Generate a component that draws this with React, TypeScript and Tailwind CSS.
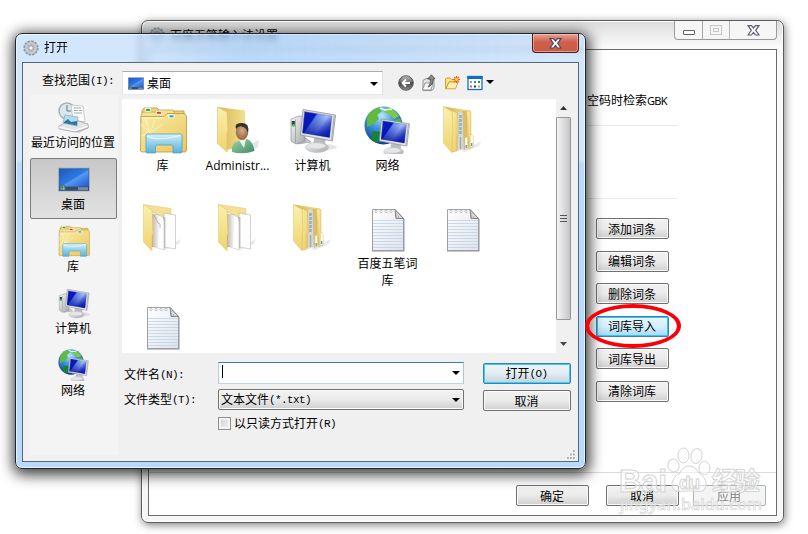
import type { ReactNode } from 'react';
import clsx from 'clsx';

const uiFont = "font-['Open_Sans','Noto_Sans_CJK_SC',sans-serif]";
const formFont = "font-['Noto_Sans_CJK_SC',sans-serif]";

/* Shared gradients for all icons */
const IconDefs = () => (
  <svg width="0" height="0" className="absolute" aria-hidden="true">
    <defs>
      <linearGradient id="yellow" x1="0" y1="0" x2="1" y2="1">
        <stop offset="0" stopColor="#f9eda9" />
        <stop offset="1" stopColor="#e9c75c" />
      </linearGradient>
      <linearGradient id="panel" x1="0" y1="0" x2="0" y2="1">
        <stop offset="0" stopColor="#fbf0ae" />
        <stop offset="1" stopColor="#f0d46c" />
      </linearGradient>
      <linearGradient id="back" x1="0" y1="0" x2="1" y2="0">
        <stop offset="0" stopColor="#d8b657" />
        <stop offset="1" stopColor="#f2df8e" />
      </linearGradient>
      <linearGradient id="screen" x1="0" y1="0" x2="1" y2="0.6">
        <stop offset="0" stopColor="#0a1cb4" />
        <stop offset="0.38" stopColor="#0719bd" />
        <stop offset="0.42" stopColor="#5c83e8" />
        <stop offset="0.7" stopColor="#a9c2f6" />
        <stop offset="1" stopColor="#2a4bd5" />
      </linearGradient>
      <linearGradient id="screenDark" x1="0" y1="0" x2="0" y2="1">
        <stop offset="0.2" stopColor="#0414a8" stopOpacity="0" />
        <stop offset="1" stopColor="#0412a4" stopOpacity="0.95" />
      </linearGradient>
      <linearGradient id="metal" x1="0" y1="0" x2="1" y2="1">
        <stop offset="0" stopColor="#f8f8f8" />
        <stop offset="1" stopColor="#a4a8ab" />
      </linearGradient>
      <linearGradient id="glass" x1="0" y1="0" x2="0" y2="1">
        <stop offset="0" stopColor="#d6f2fb" />
        <stop offset="0.5" stopColor="#8fcfe9" />
        <stop offset="1" stopColor="#5fb0d8" />
      </linearGradient>
      <linearGradient id="desk" x1="0" y1="0" x2="1" y2="1">
        <stop offset="0" stopColor="#1d57b8" />
        <stop offset="0.5" stopColor="#2e78e4" />
        <stop offset="0.55" stopColor="#5698f2" />
        <stop offset="1" stopColor="#1c58cf" />
      </linearGradient>
      <linearGradient id="note" x1="0" y1="0" x2="1" y2="1">
        <stop offset="0" stopColor="#ffffff" />
        <stop offset="1" stopColor="#dfe2ef" />
      </linearGradient>
      <radialGradient id="globe" cx="0.45" cy="0.25" r="0.8">
        <stop offset="0" stopColor="#b9e6fa" />
        <stop offset="0.4" stopColor="#3f9bdc" />
        <stop offset="1" stopColor="#0e2f86" />
      </radialGradient>
      <radialGradient id="skin" cx="0.5" cy="0.4" r="0.6">
        <stop offset="0" stopColor="#d9ac86" />
        <stop offset="1" stopColor="#94643f" />
      </radialGradient>
      <linearGradient id="shirt" x1="0" y1="0" x2="1" y2="1">
        <stop offset="0" stopColor="#9ed4a9" />
        <stop offset="1" stopColor="#3d8a63" />
      </linearGradient>
      <linearGradient id="ball" x1="0" y1="0" x2="0" y2="1">
        <stop offset="0" stopColor="#a4a4a4" />
        <stop offset="0.5" stopColor="#444444" />
        <stop offset="1" stopColor="#8f8f8f" />
      </linearGradient>
      <linearGradient id="shade" x1="0" y1="0" x2="1" y2="0">
        <stop offset="0" stopColor="#9a8560" stopOpacity="0.6" />
        <stop offset="1" stopColor="#999" stopOpacity="0" />
      </linearGradient>
    </defs>
  </svg>
);

type IconProps = { size?: number };

const LibraryIcon = ({ size = 48 }: IconProps) => (
  <svg width={size} height={size} viewBox="0 0 48 48">
    <path d="M3 12V5L5 2H18L21 5H45V14Z" fill="#ecd47c" stroke="#b89339" strokeWidth="0.8" />
    <path d="M2 14V9L4 6H17L19 4H34L36 8H46V18H2Z" fill="#f4e195" stroke="#bf9b42" strokeWidth="0.7" />
    <rect x="6.500" y="2.500" width="5" height="2.800" fill="#2ba834" stroke="#fff" strokeWidth="0.8" />
    <rect x="17.500" y="5.300" width="5" height="2.800" fill="#d93b20" stroke="#fff" strokeWidth="0.8" />
    <path d="M2 10.500H25L28 7.500H45L47.500 10V45L46 46H3L1.500 45Z" fill="url(#yellow)" stroke="#bf9736" strokeWidth="0.8" />
    <path d="M2.500 12H26" stroke="#fff8cf" />
    <rect x="30" y="9" width="5" height="2.800" fill="#2996dd" stroke="#fff" strokeWidth="0.8" />
    <path d="M11 27L2 18M11 27L6 12M11 27L16 14M11 27L24 18M11 27L2 30" stroke="#fffbe0" strokeWidth="0.8" opacity="0.75" />
    <path d="M8 28H42L43 29V46L42 47H34V40L32.500 39H18L16.500 40V47H8L7 46V29Z" fill="url(#glass)" stroke="#4da2cb" strokeWidth="0.8" />
    <path d="M8.500 30Q20 36 41.500 29" stroke="#effbff" strokeWidth="1.200" fill="none" opacity="0.8" />
  </svg>
);

const Monitor = () => (
  <>
    <path d="M26 28L37 30L36 40L24 39Z" fill="#b9bdc0" />
    <ellipse cx="28" cy="41.500" rx="11.500" ry="5" fill="url(#metal)" stroke="#b4b7ba" strokeWidth="0.6" />
    <ellipse cx="28" cy="40" rx="8" ry="2.500" fill="#e4e6e8" />
    <path d="M14 3.500L46.500 9L43.500 35L11.500 29Z" fill="#e2e4e6" stroke="#8d9296" strokeWidth="0.8" />
    <path d="M15.500 5.500L43 10L40.500 31.500L13.500 27Z" fill="url(#screen)" stroke="#8286a0" strokeWidth="0.5" />
    <path d="M15.500 5.500L43 10L40.500 31.500L13.500 27Z" fill="url(#screenDark)" />
    <path d="M45.300 9.500L42.500 34" stroke="#a4a8aa" strokeWidth="1" />
  </>
);

const ComputerIcon = ({ size = 48 }: IconProps) => (
  <svg width={size} height={size} viewBox="0 0 48 48">
    <ellipse cx="36" cy="41" rx="12" ry="3" fill="#bbb" opacity="0.4" />
    <path d="M7 34L17 32L22 36L9 38Z" fill="#c2c5c7" stroke="#8f9396" strokeWidth="0.6" />
    <path d="M2 13L10 10L16 11V35L7 38L2 35Z" fill="url(#metal)" stroke="#8c9093" strokeWidth="0.7" />
    <path d="M6.500 13.500V37" stroke="#999c9f" strokeWidth="0.8" />
    <rect x="2.800" y="15" width="3" height="5" fill="#353b40" />
    <circle cx="4.500" cy="19.500" r="1.400" fill="#46d13f" />
    <Monitor />
  </svg>
);

const NetworkIcon = ({ size = 48 }: IconProps) => (
  <svg width={size} height={size} viewBox="0 0 48 48">
    <circle cx="19.500" cy="19.500" r="19" fill="url(#globe)" />
    <path d="M3 12Q7 3 15 1.500L18 5L13 9L15 13L9 18L3 21Z" fill="#5fbb39" />
    <path d="M22 1Q31 3 35 10L30 13L25 8L20 6Z" fill="#7cc947" />
    <path d="M9 25L16 26L18 32L13 37Q8 35 7 32Z" fill="#168236" />
    <path d="M16 2L21 4L28 3" stroke="#eefaff" strokeWidth="1.500" fill="none" />
    <path d="M31 14L36 12L38 18L34 18Z" fill="#4fb53c" />
    <g transform="translate(5.500 10) scale(0.86)">
      <Monitor />
    </g>
  </svg>
);

const FolderShadow = () => <path d="M22 45L42 35L40 40L26 46Z" fill="#999" opacity="0.2" />;

const UserFolderIcon = () => (
  <svg width="48" height="48" viewBox="0 0 48 48">
    <path d="M24 45L45 34L44 41L34 46Z" fill="#999" opacity="0.25" />
    <path d="M3.500 1L31 4.500V39L13 44Z" fill="url(#back)" />
    <path d="M3.500 1L13 6L14 25L13 28V46L3.500 37.500Z" fill="url(#panel)" stroke="#dcbf60" strokeWidth="0.6" />
    <path d="M18 46Q17 37 24 35L33 33Q39 35 40.500 45Q29 49 18 46Z" fill="url(#shirt)" />
    <path d="M25 34L30 42L32 33Z" fill="#f0f2ee" />
    <ellipse cx="28" cy="26" rx="6.200" ry="8" fill="url(#skin)" />
    <path d="M22 23Q20 17 27 17Q36 16 34 27Q32 21 29 21Q25 19 22 23Z" fill="#353330" />
  </svg>
);

const FullFolderIcon = () => (
  <svg width="48" height="48" viewBox="0 0 48 48">
    <FolderShadow />
    <path d="M4.500 0.500L31 4.500L32 37L16 45Z" fill="url(#back)" />
    <path d="M19 6L25 5.500V43L19 45Z" fill="#d3d9dc" />
    <path d="M21.500 9V29" stroke="#7d9cb4" strokeWidth="2.500" strokeDasharray="3 1" opacity="0.7" />
    <path d="M21.500 31V43" stroke="#a4a9ab" strokeWidth="1.500" />
    <path d="M24 5L28 5.500V30L30 32V41L25 44Z" fill="#ddbe66" stroke="#cdab50" strokeWidth="0.4" />
    <path d="M27.500 4.500L32 5.500V28L34 30V41L30 43Z" fill="url(#yellow)" stroke="#cfae50" strokeWidth="0.4" />
    <path d="M26 32L28.500 31V43L26 44ZM31.500 29H34V40.500L31.500 41.500Z" fill="#fff" stroke="#d9c47b" strokeWidth="0.4" />
    <path d="M27.200 39V42.500M32.700 37V40" stroke="#4a97dd" strokeWidth="1.300" />
    <path d="M13 4.500L18.500 7L19.500 28L18 30V45L13 46Z" fill="url(#yellow)" stroke="#cfae50" strokeWidth="0.5" />
    <path d="M4.500 0.500L13 5.500L14 28L13 31V47L4.500 37Z" fill="url(#panel)" stroke="#dfc263" strokeWidth="0.5" />
  </svg>
);

const PaperFolderIcon = ({ folded = false }: { folded?: boolean }) => (
  <svg width="48" height="48" viewBox="0 0 48 48">
    <FolderShadow />
    <path d="M4.500 0.500L32 4.500V15L14 42Z" fill="#f3e093" stroke="#dcc677" strokeWidth="0.5" />
    <path d="M25 9L36.500 11V45L25 43Z" fill="#fdfdfd" stroke="#b4b4b4" strokeWidth="0.6" />
    <path d="M23 13H26.500V43L24 46Z" fill="#888" opacity="0.45" />
    <path d="M13 8L24 13L25 18V46L13 42Z" fill="#fdfdfd" stroke="#c2c2c2" strokeWidth="0.6" />
    {folded && <path d="M15 11L19 19L21 20L21 24" fill="none" stroke="#aaa" strokeWidth="0.8" />}
    <path d="M13 10H21L19 43H13Z" fill="url(#shade)" />
    <path d="M4.500 0.500L13 6L14 29L13 32V47L4.500 38Z" fill="url(#panel)" stroke="#dfc263" strokeWidth="0.5" />
  </svg>
);

const NotepadIcon = () => (
  <svg width="48" height="48" viewBox="0 0 48 48">
    <path d="M9 6H31L40.500 15V47.500H8Z" fill="#8f9195" />
    <path d="M8.500 5.500H31L39.500 14.500V46.500H8.500Z" fill="url(#note)" stroke="#97999e" strokeWidth="0.9" />
    <path d="M9 16.500H39M9 19.500H39M9 22.500H39M9 25.500H39M9 28.500H39M9 31.500H39M9 34.500H39M9 37.500H39M9 40.500H39M9 43.500H39" stroke="#c3d7e3" strokeWidth="0.9" />
    <path d="M31 5.500L39.500 14.500H32Z" fill="#d6d8da" stroke="#77797d" strokeWidth="0.9" />
    <path d="M32 9V13H36" stroke="#8a8c90" fill="none" strokeDasharray="1 1" />
    {[12, 17, 22, 27].map((x) => (
      <circle key={x} cx={x} cy="7.500" r="1.200" fill="#fff" stroke="#aaacb0" strokeWidth="0.7" />
    ))}
  </svg>
);

const RecentIcon = () => (
  <svg width="32" height="32" viewBox="0 0 32 32">
    <path d="M17 31L31 24V27L21 32Z" fill="#aaa" opacity="0.5" />
    <circle cx="9" cy="10" r="8" fill="#dce7ec" stroke="#a4b1b8" strokeWidth="1.500" />
    <path d="M9 4V10H13" stroke="#65757e" fill="none" />
    <path d="M13 4L25 5L27 21L15 19Z" fill="#fbfbfb" stroke="#b5babd" strokeWidth="0.7" />
    <path d="M16 7H23M16 9.500H20M16 12H24M21 9.500H24" stroke="#8b9ca8" strokeWidth="0.8" />
    <path d="M1 25L14 18L30 23V27L17 31L1 28Z" fill="#e4e5e6" stroke="#989b9d" strokeWidth="0.7" />
    <path d="M7 14L20 16L19 25L5 22Z" fill="#b4def5" stroke="#8fa0aa" strokeWidth="0.7" />
    <path d="M6 21L10 18L13 21L19 20V24.500L6 22Z" fill="#267a9b" />
    <path d="M1 26L17 29.500L30 25" stroke="#fff" fill="none" />
  </svg>
);

const DesktopIcon = ({ className }: { className: string }) => (
  <svg className={className} viewBox="0 0 32 26" preserveAspectRatio="none">
    <rect x="0.500" y="1" width="31" height="24" fill="#41628f" stroke="#a7b6c9" strokeWidth="0.8" />
    <rect x="1.500" y="2" width="29" height="18.500" fill="url(#desk)" />
    <rect x="1" y="20.500" width="30" height="4" fill="#364c6d" />
    <rect x="20" y="21" width="10" height="3" fill="#778ba5" />
    <circle cx="4.500" cy="21.500" r="3.300" fill="#2a72a8" />
    <path d="M2.500 19.500H4.200V21.200H2.500Z" fill="#ef5b24" />
    <path d="M4.800 19.500H6.500V21.200H4.800Z" fill="#8dc63f" />
    <path d="M2.500 21.800H4.200V23.500H2.500Z" fill="#4cb9f1" />
    <path d="M4.800 21.800H6.500V23.500H4.800Z" fill="#ffcb2f" />
  </svg>
);

const GearIcon = ({ className }: { className?: string }) => (
  <svg width="16" height="16" viewBox="0 0 16 16" className={className}>
    <circle cx="8" cy="8" r="6.900" fill="none" stroke="#8f989f" strokeWidth="1.600" strokeDasharray="2.400 1.210" />
    <circle cx="8" cy="8" r="4.700" fill="none" stroke="#8f989f" strokeWidth="3.600" />
    <circle cx="8" cy="8" r="4.700" fill="none" stroke="#c6cdd2" strokeWidth="2.600" />
    <circle cx="8" cy="8" r="2.300" fill="#eef5fb" stroke="#7d868d" strokeWidth="0.8" />
  </svg>
);

const CloseGlyph = ({ outline }: { outline: string }) => (
  <svg width="13" height="11" viewBox="0 0 13 11">
    <path d="M1 0.700H4.500L6.500 3L8.500 0.700H12L8.700 5.300L12 10H8.500L6.500 7.500L4.500 10H1L4.300 5.300Z" fill="#fbfbfb" stroke={outline} strokeWidth="1.200" />
  </svg>
);

const Caret = ({ className }: { className?: string }) => (
  <svg width="8" height="4" viewBox="0 0 8 4" className={className}>
    <path d="M0 0H8L4 4Z" fill="#000" />
  </svg>
);

const places = [
  { icon: <RecentIcon />, label: '最近访问的位置' },
  { icon: <DesktopIcon className="mt-1 h-[25px] w-8" />, label: '桌面', selected: true },
  { icon: <LibraryIcon size={32} />, label: '库' },
  { icon: <ComputerIcon size={32} />, label: '计算机' },
  { icon: <NetworkIcon size={32} />, label: '网络' },
];

const files = [
  { icon: <LibraryIcon />, label: '库' },
  { icon: <UserFolderIcon />, label: 'Administr...' },
  { icon: <ComputerIcon />, label: '计算机' },
  { icon: <NetworkIcon />, label: '网络' },
  { icon: <FullFolderIcon />, label: '' },
  { icon: <PaperFolderIcon folded />, label: '' },
  { icon: <PaperFolderIcon />, label: '' },
  { icon: <FullFolderIcon />, label: '' },
  { icon: <NotepadIcon />, label: '百度五笔词库' },
  { icon: <NotepadIcon />, label: '' },
  { icon: <NotepadIcon />, label: '' },
];

/* Bracketed access keys are set in narrow half-width characters */
const Key = ({ children }: { children: ReactNode }) => (
  <span className="relative -top-px font-['Liberation_Mono',monospace] text-[11px] leading-none tracking-[-0.6px]">{children}</span>
);

type ButtonProps = {
  children: ReactNode;
  className?: string;
  tone?: 'normal' | 'hot' | 'default' | 'disabled';
};

const Button = ({ children, className, tone = 'normal' }: ButtonProps) => (
  <button
    className={clsx(
      'flex h-[21px] shrink-0 items-center justify-center rounded-[2px] border pr-px text-xs leading-none',
      formFont,
      tone === 'normal' && 'border-[#707070] bg-linear-to-b from-[#f2f2f2] from-0% via-[#ebebeb] via-50% to-[#cfcfcf] shadow-[inset_0_0_0_1px_#fafafa]',
      tone === 'hot' && 'border-[#3c7fb1] bg-linear-to-b from-[#e9f6fd] via-[#d6effc] via-50% to-[#a7d9f5] shadow-[inset_0_0_0_1px_#30c8f6]',
      tone === 'default' && 'border-[#3c7fb1] bg-linear-to-b from-[#f0f4f6] via-[#e3edf2] via-50% to-[#bfd3de] shadow-[inset_0_0_0_1px_#2fd2fa]',
      tone === 'disabled' && 'border-[#adb2b5] bg-[#f4f4f4] text-[#838383]',
      className,
    )}
  >
    <span>{children}</span>
  </button>
);

const SettingsWindow = () => (
  <div className="absolute top-5 left-[141px] flex h-[503px] w-[643px] flex-col rounded-[7px] border border-[#5c5c5c] bg-linear-to-b from-[#dcdcdc] from-0% via-[#fafafa] via-5% to-[#f7f7f7] px-1.5 pb-1.5 shadow-[1px_2px_9px_rgba(0,0,0,0.5),inset_0_0_0_1px_#ffffff]">
    <div className="flex h-7 shrink-0 justify-between">
      <div className="flex items-start gap-[5px] pt-[6px]">
        <GearIcon className="ml-px" />
        <span className={clsx('mt-px text-xs leading-4', uiFont)}>百度五笔输入法设置</span>
      </div>
      <div className="flex h-[19px] overflow-hidden rounded-b-[4px] border border-t-0 border-[#9a9a9a] bg-[#f6f6f6]">
        <div className="flex w-[28px] items-center justify-center border-r border-[#a8a8a8] pt-1">
          <span className="h-[5px] w-3 rounded-[1px] border border-[#5a6070] bg-white" />
        </div>
        <div className="flex w-[27px] items-center justify-center border-r border-[#b8b8b8]">
          <span className="flex h-[10px] w-3 items-center justify-center border border-[#c6c6c6]">
            <span className="h-1 w-[6px] border border-[#c6c6c6]" />
          </span>
        </div>
        <div className="flex w-[46px] items-center justify-center">
          <CloseGlyph outline="#5a6070" />
        </div>
      </div>
    </div>
    <div className="flex grow flex-col border border-[#6b6b6b] bg-white">
      <div className="flex h-[423px] flex-col border-b border-[#dcdcdc] pl-[437px]">
        <div className={clsx('mt-[41px] h-[17px] pl-px text-xs leading-[17px] whitespace-nowrap', formFont)}>
          空码时检索<span className="font-['Noto_Sans',sans-serif] text-[11px] leading-none tracking-[-0.7px]">GBK</span>
        </div>
        <div className="mt-[17px] h-[74px] w-[91px] border-y border-[#e8e8e8]" />
        <div className="mt-[19px] flex flex-col gap-[11.600px] pl-[10px]">
          <Button className="w-[73px]">添加词条</Button>
          <Button className="w-[73px]">编辑词条</Button>
          <Button className="w-[73px]">删除词条</Button>
          <Button className="w-[73px]" tone="hot">词库导入</Button>
          <Button className="w-[73px]">词库导出</Button>
          <Button className="w-[73px]">清除词库</Button>
        </div>
      </div>
      <div className="flex justify-end pt-[12px] pr-[10px]">
        <Button className="mr-[17px] w-[73px]">确定</Button>
        <Button className="mr-[14px] w-[73px]">取消</Button>
        <Button className="w-[73px]" tone="disabled">应用</Button>
      </div>
    </div>
  </div>
);

const Toolbar = () => (
  <div className="flex h-[23px] items-center">
    <svg width="16" height="16" viewBox="0 0 16 16" className="ml-[15px]">
      <circle cx="8" cy="8" r="7.300" fill="url(#ball)" stroke="#555" strokeWidth="0.9" />
      <path d="M2 7A6 6 0 0 1 14 7Q8 9 2 7Z" fill="#fff" opacity="0.22" />
      <path d="M12 8H5M8 4.500L4.500 8L8 11.500" fill="none" stroke="#fff" strokeWidth="1.900" />
    </svg>
    <svg width="16" height="18" viewBox="0 0 16 18" className="ml-[7px]">
      <path d="M2 6.500L5 4.500H8L9 6H13V14L11 16.500H2Z" fill="#e2e2e2" stroke="#8a8a8a" strokeWidth="0.9" />
      <path d="M1.500 16L4 9H12L10 16Z" fill="#f7f7f7" stroke="#8f8f8f" strokeWidth="0.9" />
      <path d="M7 13Q10 10 9.500 5H6.500L10.500 0.800L14 5H12Q12.500 11 7 13Z" fill="#8c8c8c" stroke="#444" strokeWidth="0.8" />
    </svg>
    <svg width="17" height="16" viewBox="0 0 17 16" className="ml-[7px]">
      <path d="M1.500 13.500V4L2.500 3H6L7.500 4.500H12V7H5L2 13.500Z" fill="#f9df82" stroke="#c79832" strokeWidth="0.9" />
      <path d="M2 13.800L5 7H14L11.500 13.800Z" fill="#ffefac" stroke="#cf9e36" strokeWidth="0.9" />
      <path d="M12.500 1V8M9 4.500H16M10 2L15 7M15 2L10 7" stroke="#f15f1a" strokeWidth="1.100" />
      <circle cx="12.500" cy="4.500" r="1.400" fill="#ffd43a" />
    </svg>
    <svg width="16" height="16" viewBox="0 0 16 16" className="mr-px ml-[6px]">
      <rect x="1" y="1.500" width="14" height="13" fill="#fff" stroke="#156fd0" strokeWidth="1.300" />
      <rect x="0.500" y="1" width="15" height="3" fill="#0e6bd0" />
      <rect x="3" y="6" width="2" height="2" fill="#999" />
      <rect x="7" y="6" width="2" height="2" fill="#2c7fd2" />
      <rect x="11" y="6" width="2" height="2" fill="#27922b" />
      <rect x="3" y="10.500" width="2" height="2" fill="#e8603d" />
      <rect x="7" y="10.500" width="2" height="2" fill="#1b3f94" />
      <rect x="11" y="10.500" width="2" height="2" fill="#d6a326" />
    </svg>
    <Caret className="-mt-px ml-[2px]" />
  </div>
);

const ScrollBar = () => (
  <div className="flex h-[254px] w-[15px] shrink-0 flex-col items-center bg-[#f0f0f0]">
    <svg width="7" height="4" viewBox="0 0 7 4" className="mt-[7px] mb-[7px]">
      <path d="M3.500 0L7 4H0Z" fill="#333" />
    </svg>
    <div className="flex h-[203px] w-[15px] flex-col items-center justify-center rounded-[1px] border border-[#979797] bg-linear-to-r from-[#f5f5f5] via-[#dddddf] via-50% to-[#c5c5c9]">
      <span className="flex w-[7px] flex-col gap-[2px]">
        <span className="h-px bg-[#555]" />
        <span className="h-px bg-[#555]" />
        <span className="h-px bg-[#555]" />
      </span>
    </div>
    <svg width="7" height="4" viewBox="0 0 7 4" className="mt-[22px]">
      <path d="M0 0H7L3.500 4Z" fill="#444" />
    </svg>
  </div>
);

const OpenDialog = () => (
  <div className="absolute top-[33px] left-[15px] flex h-[436px] w-[571px] flex-col rounded-[7px] border border-[#1d2733] bg-linear-to-b from-[#b5d6fa]/60 from-0% via-[#b5d6fa]/60 via-29% to-[#b9dafc] to-30% px-1.5 pb-1.5 shadow-[1px_3px_14px_3px_rgba(0,0,0,0.75),inset_0_0_0_1px_rgba(240,249,255,0.85)] backdrop-blur-[3px]">
    <div className="-mx-1.5 flex h-7 shrink-0 items-start justify-between bg-linear-to-r from-transparent from-20% via-[#94c2f2]/40 via-40% to-transparent to-95% px-1.5">
      <div className="flex items-center gap-[5px] pt-[6px] pl-px">
        <GearIcon />
        <span className={clsx('text-xs leading-4', uiFont)}>打开</span>
      </div>
      <div className="flex h-[19px] w-[47px] items-center justify-center rounded-b-[4px] border border-t-0 border-[#521c1c] bg-linear-to-b from-[#e5a294] from-0% via-[#cf5f4c] via-45% to-[#c95c43] shadow-[inset_0_0_0_1px_rgba(255,215,200,0.5)]">
        <CloseGlyph outline="#53485a" />
      </div>
    </div>
    <div className="flex grow flex-col border border-[#56687c] bg-[#f0f0f0] pt-2 pl-[6px]">
      <div className="flex h-6 items-start">
        <div className={clsx('w-[93px] pl-[13px] text-xs leading-[18px] whitespace-nowrap', formFont)}>
          查找范围<Key>(I):</Key>
        </div>
        <div className="flex h-[24px] w-[261px] items-center border border-t-[#abadb3] border-r-[#dbdfe6] border-b-[#e3e9ef] border-l-[#e2e3ea] bg-white pl-[5px]">
          <DesktopIcon className="h-[13px] w-4" />
          <span className={clsx('mt-px ml-[3px] text-xs', uiFont)}>桌面</span>
          <Caret className="mt-px mr-[4px] ml-auto" />
        </div>
        <Toolbar />
      </div>
      <div className="flex">
        <div className="flex h-[360px] w-[89px] shrink-0 flex-col gap-px bg-[#f4f4f4] pt-px pl-px">
          {places.map((place) => (
            <div
              key={place.label}
              className={clsx(
                'flex h-[61px] w-[87px] flex-col items-center rounded-[2px] border',
                place.selected
                  ? 'border-[#7a7a7a] bg-linear-to-b from-[#c8c8c8] to-[#e2e2e2]'
                  : 'border-transparent',
              )}
            >
              <div className="mt-[4px] flex h-[32px] items-start">{place.icon}</div>
              <span className={clsx('mt-[2px] mr-px text-xs leading-4 whitespace-nowrap', uiFont)}>{place.label}</span>
            </div>
          ))}
        </div>
        <div className="ml-1 pt-1">
          <div className="flex h-[254px] w-[449px] overflow-hidden bg-white">
            <div className="grid w-[434px] shrink-0 auto-rows-[98px] grid-cols-[repeat(5,75px)] content-start pt-[7px] pl-[3px]">
              {files.map((file, index) => (
                <div key={index} className="flex flex-col items-center">
                  {file.icon}
                  <span className={clsx('mt-[3px] max-w-[68px] text-center text-xs leading-[17px]', uiFont)}>{file.label}</span>
                </div>
              ))}
            </div>
            <ScrollBar />
          </div>
          <div className={clsx('mt-[9px] flex text-xs', formFont)}>
            <div className="-mt-px w-24 pl-[2px] leading-[25px] whitespace-nowrap">
              <div className="h-[25px]">文件名<Key>(N):</Key></div>
              <div className="h-[25px]">文件类型<Key>(T):</Key></div>
            </div>
            <div className="w-[246px]">
              <div className="flex h-[22px] items-center border border-t-[#3d7bad] border-r-[#a4c9e3] border-b-[#b7d9ed] border-l-[#b5cfe7] bg-white">
                <span className="mb-[3px] ml-[3px] h-[13px] w-px bg-black" />
                <Caret className="mr-[3px] ml-auto" />
              </div>
              <div className="mt-[5px] flex h-[21px] items-center rounded-[2px] border border-[#707070] bg-linear-to-b from-[#f2f2f2] via-[#ebebeb] via-50% to-[#cfcfcf] pl-[2px] leading-none shadow-[inset_0_0_0_1px_#fafafa]">
                <span>文本文件<Key>(*.txt)</Key></span>
                <Caret className="mt-px mr-[3px] ml-auto" />
              </div>
              <div className="mt-[5px] flex h-[16px] items-center">
                <span className="h-[13px] w-[13px] border border-[#8e8f8f] bg-linear-to-br from-[#c9cdd2] to-[#f6f6f6] shadow-[inset_0_0_0_2px_#f4f4f4]" />
                <span className="ml-[3px] leading-4 whitespace-nowrap">以只读方式打开<Key>(R)</Key></span>
              </div>
            </div>
            <div className="ml-[19px] flex flex-col gap-[6px] pt-px">
              <Button className="w-[88px]" tone="default">打开<Key>(O)</Key></Button>
              <Button className="w-[88px]">取消</Button>
            </div>
          </div>
          <div className="mt-[19px] -mr-1 flex justify-end">
            <svg width="9" height="9" viewBox="0 0 9 9" fill="#b4b4b4">
              <path d="M7 0H9V2H7ZM4 3.500H6V5.500H4ZM7 3.500H9V5.500H7ZM1 7H3V9H1ZM4 7H6V9H4ZM7 7H9V9H7Z" />
            </svg>
          </div>
        </div>
      </div>
    </div>
  </div>
);

const Watermark = () => (
  <svg width="152" height="72" viewBox="0 0 152 72" className="absolute top-[446px] left-[616px]" fill="#fff" fillOpacity="0.5" stroke="#d4d4d4" strokeWidth="1">
    <ellipse cx="67.500" cy="9.500" rx="5.500" ry="7.500" />
    <ellipse cx="80.500" cy="10" rx="5.500" ry="7.500" transform="rotate(12 80.500 10)" />
    <ellipse cx="57.500" cy="19.500" rx="5.500" ry="6.500" transform="rotate(-15 57.500 19.500)" />
    <ellipse cx="88.500" cy="22" rx="5.500" ry="6.500" />
    <path d="M73 20Q79 20 83 27Q91 32 90 40Q89 47 79 45H67Q57 47 56 40Q55 32 64 27Q67 20 73 20Z" />
    <text x="3" y="46" fontSize="32" fontWeight="700" textLength="48" lengthAdjust="spacingAndGlyphs" fontFamily="Liberation Sans, sans-serif">Bai</text>
    <text x="63" y="43" fontSize="19" fontWeight="700" textLength="21" fontFamily="Liberation Sans, sans-serif">du</text>
    <text x="96" y="44" fontSize="25" fontWeight="700" textLength="48" fontFamily="Noto Sans CJK SC, sans-serif">经验</text>
    <text x="4" y="64" fontSize="16" fontWeight="500" textLength="142" lengthAdjust="spacingAndGlyphs" fontFamily="Noto Sans, sans-serif" strokeWidth="0.7">jingyan.baidu.com</text>
  </svg>
);

const App = () => {
  return (
    <main className="relative h-[534px] w-[808px] overflow-hidden bg-white text-black">
      <IconDefs />
      <SettingsWindow />
      <OpenDialog />
      {/* Red ring around the import button */}
      <div className="absolute top-[304px] left-[585px] h-[44px] w-[96px] rounded-[50%] border-[4px] border-[#fb0006]" />
      <Watermark />
    </main>
  );
};

export default App;
